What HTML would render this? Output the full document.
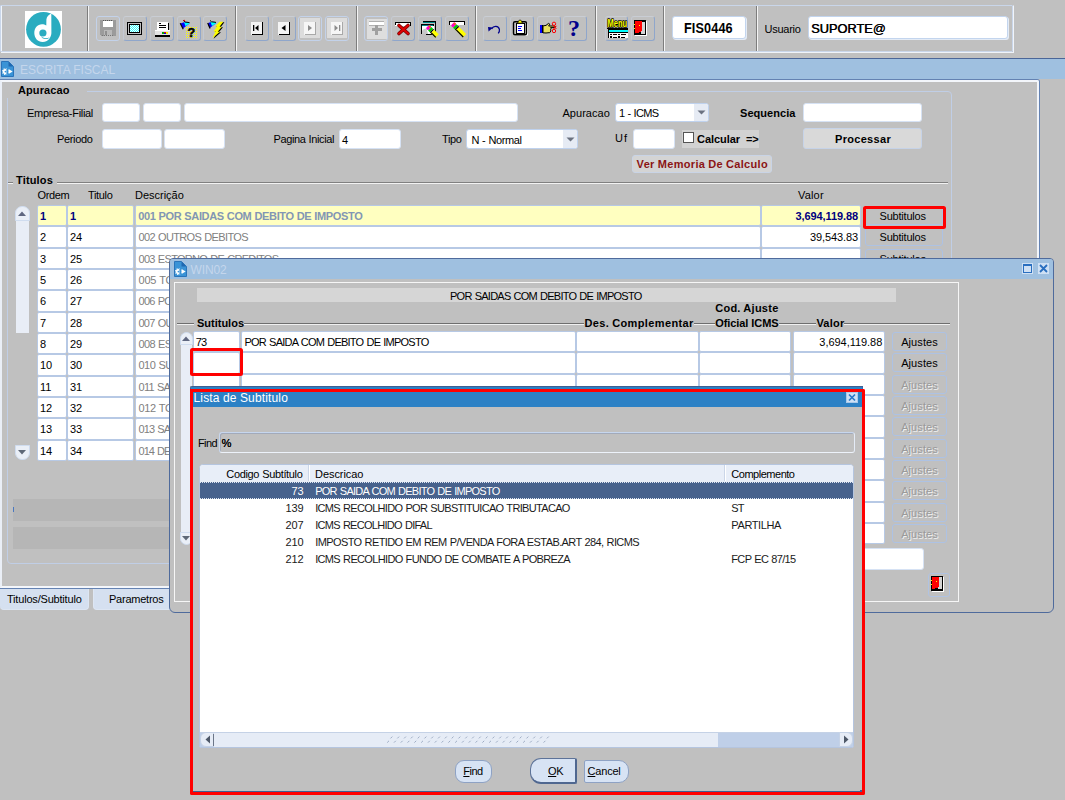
<!DOCTYPE html>
<html lang="pt-BR"><head><meta charset="utf-8"><title>ESCRITA FISCAL</title>
<style>
html,body{margin:0;padding:0;}
body{width:1065px;height:800px;overflow:hidden;background:#c0c0c0;font-family:"Liberation Sans",Arial,sans-serif;font-size:11px;color:#000;}
#root{position:relative;width:1065px;height:800px;overflow:hidden;background:#c0c0c0;}
#root div,#root span.t,#root svg{position:absolute;box-sizing:border-box;}
.t{white-space:nowrap;line-height:13px;font-size:11px;}
.b{font-weight:bold;}
.fld{background:#fff;border:1px solid #d6e2f4;border-radius:3px;}
.cell{background:#fff;border:1px solid #b7c9e5;border-radius:2px;}
.celly{background:#ffffc0;border:1px solid #b7c9e5;border-radius:2px;}
.tbtn{border:1px solid #8fa6cb;border-top-color:#c9cdd4;border-left-color:#c4c9d2;border-radius:3px;background:#c0c0c0;}
.tbtnd{border:1px solid #c3d2ea;border-radius:3px;background:#c0c0c0;}
.sep{border-left:1px solid #7d7d7d;border-right:1px solid #f4f4f4;width:2px;}
.btn{border:1px solid #b4c4de;border-radius:3px;background:#c0c0c0;text-align:center;}
.gray{color:#808080;}
.dis{color:#9a9a9a;text-shadow:1px 1px 0 #f0f0f0;}

</style></head><body>
<div id="root">
<div style="left:1px;top:5px;width:1013px;height:48px;border:1px solid #f0f4fa;border-top-color:#c0c0c0;"></div>
<div style="left:0px;top:5px;width:1013px;height:47px;border:1px solid #c9d6ea;border-radius:1px;"></div>
<div class="sep" style="left:87px;top:6px;width:2px;height:45px;"></div>
<div class="sep" style="left:235px;top:6px;width:2px;height:45px;"></div>
<div class="sep" style="left:356px;top:6px;width:2px;height:45px;"></div>
<div class="sep" style="left:475px;top:6px;width:2px;height:45px;"></div>
<div class="sep" style="left:595px;top:6px;width:2px;height:45px;"></div>
<div class="sep" style="left:663px;top:6px;width:2px;height:45px;"></div>
<div class="sep" style="left:756px;top:6px;width:2px;height:45px;"></div>
<div style="left:25px;top:11px;width:37px;height:37px;background:#fff;"></div>
<svg style="left:25px;top:11px" width="37" height="37" viewBox="0 0 37 37"><circle cx="18.5" cy="18.3" r="17.4" fill="#2aacc0"/><path d="M26.3 2.6 C24 3.6 21.6 5.6 21.4 8.5 L21.3 14.6 C20 13.8 18.6 13.3 17 13.3 C12.4 13.3 9.3 17.2 9.3 22 C9.3 27 12.8 31 17.6 31 C20.6 31 23.2 29.6 24.9 26.9 C25.9 25.3 26.4 23.6 26.4 21.6 Z" fill="#fff"/><circle cx="17.9" cy="22" r="3.6" fill="#2aacc0"/><path d="M15.6 24.6 C17.6 27.4 21.6 27.9 24.8 26.2 C22.4 29.0 17.2 28.9 15.6 24.6 Z" fill="#2aacc0"/></svg>
<div class="tbtnd" style="left:96px;top:16px;width:24px;height:24.5px;"></div>
<svg style="left:96px;top:16px" width="24" height="24" viewBox="0 0 24 24"><g transform="translate(0,0)"><g shape-rendering="crispEdges"><path d="M4 4 H20 V20 H5 L4 19 Z" fill="#9b9b9b"/><rect x="7" y="5" width="10" height="6" fill="#fff"/><rect x="8" y="14" width="8" height="6" fill="#b9b9b9"/><rect x="9" y="15" width="2" height="4" fill="#8f8f8f"/></g><path d="M7 4.5 H17" stroke="#555" stroke-width="1" stroke-dasharray="1 1"/><path d="M6 19.5 H18" stroke="#777" stroke-width="1" stroke-dasharray="1 1"/></g></svg>
<div class="tbtn" style="left:123px;top:16px;width:24px;height:24.5px;"></div>
<svg style="left:123px;top:16px" width="24" height="24" viewBox="0 0 24 24"><g transform="translate(0,0)"><g shape-rendering="crispEdges"><rect x="4" y="6" width="15" height="13" rx="1" fill="#000"/><rect x="5" y="7" width="13" height="11" fill="#c0c0c0"/><rect x="6" y="8" width="11" height="9" fill="#000"/><rect x="7" y="9" width="9" height="7" fill="#3ff"/><rect x="7" y="9" width="1" height="1" fill="#fff"/><rect x="9" y="9" width="1" height="1" fill="#fff"/><rect x="11" y="9" width="1" height="1" fill="#fff"/><rect x="13" y="9" width="1" height="1" fill="#fff"/><rect x="15" y="9" width="1" height="1" fill="#fff"/><rect x="8" y="10" width="1" height="1" fill="#fff"/><rect x="10" y="10" width="1" height="1" fill="#fff"/><rect x="12" y="10" width="1" height="1" fill="#fff"/><rect x="14" y="10" width="1" height="1" fill="#fff"/><rect x="7" y="11" width="1" height="1" fill="#fff"/><rect x="9" y="11" width="1" height="1" fill="#fff"/><rect x="11" y="11" width="1" height="1" fill="#fff"/><rect x="13" y="11" width="1" height="1" fill="#fff"/><rect x="15" y="11" width="1" height="1" fill="#fff"/><rect x="8" y="12" width="1" height="1" fill="#fff"/><rect x="10" y="12" width="1" height="1" fill="#fff"/><rect x="12" y="12" width="1" height="1" fill="#fff"/><rect x="14" y="12" width="1" height="1" fill="#fff"/><rect x="7" y="13" width="1" height="1" fill="#fff"/><rect x="9" y="13" width="1" height="1" fill="#fff"/><rect x="11" y="13" width="1" height="1" fill="#fff"/><rect x="13" y="13" width="1" height="1" fill="#fff"/><rect x="15" y="13" width="1" height="1" fill="#fff"/><rect x="8" y="14" width="1" height="1" fill="#fff"/><rect x="10" y="14" width="1" height="1" fill="#fff"/><rect x="12" y="14" width="1" height="1" fill="#fff"/><rect x="14" y="14" width="1" height="1" fill="#fff"/><rect x="7" y="15" width="1" height="1" fill="#fff"/><rect x="9" y="15" width="1" height="1" fill="#fff"/><rect x="11" y="15" width="1" height="1" fill="#fff"/><rect x="13" y="15" width="1" height="1" fill="#fff"/><rect x="15" y="15" width="1" height="1" fill="#fff"/></g></g></svg>
<div class="tbtn" style="left:150px;top:16px;width:24px;height:24.5px;"></div>
<svg style="left:150px;top:16px" width="24" height="24" viewBox="0 0 24 24"><g transform="translate(0,0)"><g shape-rendering="crispEdges"><rect x="7" y="6" width="11" height="8" fill="#fff"/><path d="M18 7 V14" stroke="#000"/><path d="M7 14.5 H18" stroke="#000"/><path d="M9 7.5 H11 M9 9.5 H16 M9 11.5 H16" stroke="#000"/><rect x="5" y="14" width="15" height="5" fill="#e4e4e4"/><path d="M5 14.5 H20" stroke="#fff"/><rect x="5" y="19" width="15" height="1.5" fill="#000"/><rect x="6" y="20" width="2" height="1.4" fill="#000"/><rect x="17" y="20" width="2" height="1.4" fill="#000"/><rect x="12" y="16" width="2" height="2" fill="#0a0"/><rect x="14" y="16" width="2" height="2" fill="#e00"/><rect x="14" y="17" width="2" height="1" fill="#00d"/><rect x="16" y="16" width="2" height="1.5" fill="#ee0"/></g></g></svg>
<div class="tbtn" style="left:177px;top:16px;width:24px;height:24.5px;"></div>
<svg style="left:177px;top:16px" width="24" height="24" viewBox="0 0 24 24"><g transform="translate(0,1)"><path d="M3.5 6.5 L6 11.5 L12.5 6.5 L11 5 L7 5.2 Z" fill="#00f"/><path d="M7 5.2 L11.6 5.2 L12.6 6.4 L8.5 9.2 Z" fill="#0ff"/><path d="M3.2 6.2 L6.2 12.2" stroke="#000" stroke-width="1.2"/><path d="M6.3 3.4 L8 5 L12.5 5.6" stroke="#000" stroke-width="1" fill="none"/><circle cx="7.3" cy="3.6" r="0.8" fill="#f00"/><g fill="#ff0" shape-rendering="crispEdges"><rect x="9" y="10" width="1" height="1"/><rect x="9" y="12" width="1" height="1"/><rect x="9" y="14" width="1" height="1"/><rect x="9" y="16" width="1" height="1"/><rect x="9" y="18" width="1" height="1"/><rect x="9" y="20" width="1" height="1"/><rect x="11" y="10" width="1" height="1"/><rect x="11" y="12" width="1" height="1"/><rect x="11" y="14" width="1" height="1"/><rect x="11" y="16" width="1" height="1"/><rect x="11" y="18" width="1" height="1"/><rect x="11" y="20" width="1" height="1"/><rect x="13" y="10" width="1" height="1"/><rect x="13" y="12" width="1" height="1"/><rect x="13" y="14" width="1" height="1"/><rect x="13" y="16" width="1" height="1"/><rect x="13" y="18" width="1" height="1"/><rect x="13" y="20" width="1" height="1"/><rect x="15" y="10" width="1" height="1"/><rect x="15" y="12" width="1" height="1"/><rect x="15" y="14" width="1" height="1"/><rect x="15" y="16" width="1" height="1"/><rect x="15" y="18" width="1" height="1"/><rect x="15" y="20" width="1" height="1"/><rect x="17" y="10" width="1" height="1"/><rect x="17" y="12" width="1" height="1"/><rect x="17" y="14" width="1" height="1"/><rect x="17" y="16" width="1" height="1"/><rect x="17" y="18" width="1" height="1"/><rect x="17" y="20" width="1" height="1"/><rect x="19" y="10" width="1" height="1"/><rect x="19" y="12" width="1" height="1"/><rect x="19" y="14" width="1" height="1"/><rect x="19" y="16" width="1" height="1"/><rect x="19" y="18" width="1" height="1"/><rect x="19" y="20" width="1" height="1"/></g><text x="14.2" y="19.6" font-family="Liberation Sans,Arial,sans-serif" font-weight="bold" font-size="12.5" text-anchor="middle" fill="#000" stroke="#000" stroke-width="0.5">?</text></g></svg>
<div class="tbtn" style="left:203px;top:16px;width:24px;height:24.5px;"></div>
<svg style="left:203px;top:16px" width="24" height="24" viewBox="0 0 24 24"><g transform="translate(0.5,0.8)"><path d="M4.5 6.5 L6 11.5 L12.5 6.5 L11 5 L7 5.2 Z" fill="#00f"/><path d="M7 5.2 L11.6 5.2 L12.6 6.4 L8.5 9.2 Z" fill="#0ff"/><path d="M4.2 6.2 L6.6 11.6" stroke="#000" stroke-width="1.2"/><path d="M6.5 3.6 L8 5 L12.5 5.6" stroke="#000" stroke-width="1" fill="none"/><path d="M16 5 L19.8 5 L16 10 L18.4 10 L14.2 15 L16.4 15 L9 21.4 L12 14.6 L10 14.6 L13.6 9.6 L11.6 9.6 Z" fill="#000" transform="translate(1.1,0.5)"/><path d="M16 5 L19.8 5 L16 10 L18.4 10 L14.2 15 L16.4 15 L9 21.4 L12 14.6 L10 14.6 L13.6 9.6 L11.6 9.6 Z" fill="#ff0"/></g></svg>
<div class="tbtn" style="left:244.5px;top:16px;width:24px;height:24.5px;"></div>
<svg style="left:244.5px;top:16px" width="24" height="24" viewBox="0 0 24 24"><g transform="translate(0,0)"><g shape-rendering="crispEdges"><rect x="6" y="6" width="11" height="12.5" fill="#f4f4f4"/><path d="M17.5 6 V19 M7 18.5 H18" stroke="#000" fill="none"/></g><rect x="8" y="9" width="1.3" height="6" fill="#000"/><path d="M13.5 9 V15 L10 12 Z" fill="#000"/></g></svg>
<div class="tbtn" style="left:271.5px;top:16px;width:24px;height:24.5px;"></div>
<svg style="left:271.5px;top:16px" width="24" height="24" viewBox="0 0 24 24"><g transform="translate(0,0)"><g shape-rendering="crispEdges"><rect x="6" y="6" width="11" height="12.5" fill="#f4f4f4"/><path d="M17.5 6 V19 M7 18.5 H18" stroke="#000" fill="none"/></g><path d="M13.5 9 V15 L9.5 12 Z" fill="#000"/></g></svg>
<div class="tbtnd" style="left:298px;top:16px;width:24px;height:24.5px;"></div>
<svg style="left:298px;top:16px" width="24" height="24" viewBox="0 0 24 24"><g transform="translate(0,0)"><g shape-rendering="crispEdges"><rect x="2" y="2" width="20" height="20" fill="#dcdcdc"/><rect x="6" y="6" width="11" height="12.5" fill="#f6f6f6"/><path d="M17.5 6 V18.5 M7 18.5 H18" stroke="#a8a8a8" fill="none"/></g><path d="M10 9 V15 L14 12 Z" fill="#8c8c8c"/></g></svg>
<div class="tbtnd" style="left:324.5px;top:16px;width:24px;height:24.5px;"></div>
<svg style="left:324.5px;top:16px" width="24" height="24" viewBox="0 0 24 24"><g transform="translate(0,0)"><g shape-rendering="crispEdges"><rect x="2" y="2" width="20" height="20" fill="#dcdcdc"/><rect x="6" y="6" width="11" height="12.5" fill="#f6f6f6"/><path d="M17.5 6 V18.5 M7 18.5 H18" stroke="#a8a8a8" fill="none"/></g><path d="M9.5 9 V15 L13 12 Z" fill="#8c8c8c"/><rect x="14" y="9" width="1.3" height="6" fill="#8c8c8c"/></g></svg>
<div class="tbtnd" style="left:364px;top:16px;width:24px;height:24.5px;"></div>
<svg style="left:364px;top:16px" width="24" height="24" viewBox="0 0 24 24"><g transform="translate(1,0.8)"><g shape-rendering="crispEdges"><rect x="2" y="2" width="20" height="20" fill="#dedede"/><rect x="4" y="5" width="15" height="3" fill="#fff"/><path d="M4 4.5 H19 M4 8.5 H19" stroke="#b0b0b0"/><rect x="10" y="8" width="3" height="10" fill="#a0a0a0"/><rect x="7" y="11" width="10" height="3" fill="#a0a0a0"/></g></g></svg>
<div class="tbtn" style="left:391px;top:16px;width:24px;height:24.5px;"></div>
<svg style="left:391px;top:16px" width="24" height="24" viewBox="0 0 24 24"><g transform="translate(0.5,1.5)"><g shape-rendering="crispEdges"><rect x="3" y="5" width="15" height="3" fill="#fff"/><path d="M3 4.5 H19 M18.5 4 V8 M3.5 4 V7" stroke="#000" fill="none"/></g><path d="M7.5 8 L16.5 16 M16.5 8 L7.5 16" stroke="#700" stroke-width="3.6" stroke-linecap="round"/><path d="M7.5 8 L16.5 16 M16.5 8 L7.5 16" stroke="#d00" stroke-width="2.2" stroke-linecap="round"/></g></svg>
<div class="tbtn" style="left:418px;top:16px;width:24px;height:24.5px;"></div>
<svg style="left:418px;top:16px" width="24" height="24" viewBox="0 0 24 24"><g transform="translate(0,1)"><g shape-rendering="crispEdges"><rect x="5" y="4" width="13" height="2" fill="#000"/><rect x="5" y="5" width="13" height="1" fill="#088"/><rect x="3" y="8" width="13" height="9" fill="#fff"/><rect x="3" y="7" width="13" height="2" fill="#000"/><rect x="4" y="8" width="11" height="1" fill="#088"/><path d="M3.5 8 V17 M17.5 5 V17 M8 17.5 H18" stroke="#000" fill="none"/></g><path d="M4 17 L4 14 Q5 11.5 8.5 11.5 L10 17 Z" fill="#c8c8c8"/><g transform="translate(9.5,9.5) rotate(45)"><rect x="0" y="-2.4" width="3.2" height="4.8" rx="1" fill="#f0c"/><rect x="0.6" y="-2.4" width="2" height="1.8" fill="#f60"/><rect x="3.2" y="-2.4" width="2.6" height="4.8" fill="#0c0"/><rect x="5.8" y="-2.4" width="1.2" height="4.8" fill="#000"/><rect x="7" y="-2.4" width="6.5" height="4.8" fill="#ff0"/><rect x="7" y="1.2" width="6.5" height="1.2" fill="#000"/></g></g></svg>
<div class="tbtn" style="left:445px;top:16px;width:24px;height:24.5px;"></div>
<svg style="left:445px;top:16px" width="24" height="24" viewBox="0 0 24 24"><g transform="translate(-0.5,1.2)"><g shape-rendering="crispEdges"><rect x="4" y="5" width="15" height="3" fill="#fff"/><path d="M4 4.5 H20 M19.5 4 V8 M4.5 4 V8" stroke="#000" fill="none"/></g><g transform="translate(8,6.5) rotate(45)"><rect x="0" y="-2.4" width="3.2" height="4.8" rx="1" fill="#f0c"/><rect x="0.6" y="-2.4" width="2" height="1.8" fill="#f60"/><rect x="3.2" y="-2.4" width="2.6" height="4.8" fill="#0c0"/><rect x="5.8" y="-2.4" width="1.2" height="4.8" fill="#000"/><rect x="7" y="-2.4" width="10" height="4.8" fill="#ff0"/><rect x="7" y="1.2" width="10" height="1.2" fill="#000"/></g></g></svg>
<div class="tbtn" style="left:483px;top:16px;width:24px;height:24.5px;"></div>
<svg style="left:483px;top:16px" width="24" height="24" viewBox="0 0 24 24"><g transform="translate(0,0.5)"><path d="M8.6 12.4 C10.6 8.8 15.6 9.2 16.4 12.8 C16.7 14.4 16.2 15.6 15.2 16.8" fill="none" stroke="#00008b" stroke-width="1.25"/><path d="M5 10.4 L10 11 L5.6 15 Z" fill="#00008b"/></g></svg>
<div class="tbtn" style="left:510px;top:16px;width:24px;height:24.5px;"></div>
<svg style="left:510px;top:16px" width="24" height="24" viewBox="0 0 24 24"><g transform="translate(-1,-0.8)"><rect x="5" y="7.5" width="14" height="13" rx="1.5" fill="#fff"/><rect x="4.5" y="6.5" width="13" height="13" rx="1.5" fill="#c0c0c0" stroke="#000" stroke-width="1.4"/><g shape-rendering="crispEdges"><rect x="7" y="8" width="8" height="10" fill="#fff" stroke="#000" stroke-width="1"/><path d="M9 11.5 H13 M9 13.5 H12 M9 15.5 H13" stroke="#00f"/></g><path d="M8.5 8 L9.5 6 L10.5 4.8 H11.5 L12.5 6 L13.5 8 Z" fill="#ff0" stroke="#000" stroke-width="0.8"/></g></svg>
<div class="tbtn" style="left:537px;top:16px;width:24px;height:24.5px;"></div>
<svg style="left:537px;top:16px" width="24" height="24" viewBox="0 0 24 24"><g transform="translate(0,0.4)"><g shape-rendering="crispEdges"><rect x="3" y="9" width="2" height="8" fill="#00f"/><rect x="5" y="9" width="1" height="8" fill="#000"/></g><path d="M6 9.5 L9 9 L11.5 7 L12.8 7.8 L11.6 9.6 L18 9.6 Q19 10.4 18 11.2 L13.6 11.2 Q14.6 12.2 13.6 12.9 Q14.4 13.9 13.4 14.6 Q14 15.6 12.8 16.2 L9 16.6 L6 16.4 Z" fill="#e8e060" stroke="#000" stroke-width="1"/><circle cx="17" cy="7.4" r="1.7" fill="none" stroke="#f00" stroke-width="1"/><circle cx="17" cy="14.6" r="1.7" fill="none" stroke="#f00" stroke-width="1"/><path d="M16.2 9 L19.4 12.6 M16.2 13 L19.4 9.4" stroke="#f00" stroke-width="1"/></g></svg>
<div class="tbtn" style="left:563px;top:16px;width:24px;height:24.5px;"></div>
<svg style="left:563px;top:16px" width="24" height="24" viewBox="0 0 24 24"><g transform="translate(-1,0)"><text x="12" y="20" font-family="Liberation Serif,Times New Roman,serif" font-weight="bold" font-size="24" text-anchor="middle" fill="#00008b">?</text></g></svg>
<div class="tbtn" style="left:604.5px;top:16px;width:23px;height:24.5px;"></div>
<svg style="left:604.5px;top:16px" width="24" height="24" viewBox="0 0 24 24"><g transform="translate(0,0)"><text x="2.6" y="11.2" font-family="Liberation Sans,Arial,sans-serif" font-weight="bold" font-size="11" fill="#000" stroke="#000" stroke-width="1.7" stroke-linejoin="round" textLength="19.5" lengthAdjust="spacingAndGlyphs">Menu</text><text x="2.6" y="11.2" font-family="Liberation Sans,Arial,sans-serif" font-weight="bold" font-size="11" fill="#ff0" textLength="19.5" lengthAdjust="spacingAndGlyphs">Menu</text><g shape-rendering="crispEdges"><rect x="2" y="12" width="21" height="1" fill="#000"/><rect x="3" y="14" width="20" height="2" fill="#0ff"/><rect x="3" y="13.4" width="20" height="0.8" fill="#000"/><rect x="3" y="16" width="20" height="6.4" fill="#fff"/><path d="M3.5 13 V22.4 M3 16.5 H23" stroke="#000" fill="none"/><rect x="5" y="17.6" width="2" height="1.5" fill="#000"/><rect x="8" y="18" width="4" height="1" fill="#000"/><rect x="13" y="17.6" width="2" height="1.5" fill="#000"/><rect x="16" y="18" width="5" height="1" fill="#000"/><rect x="5" y="20.4" width="2" height="1.5" fill="#000"/><rect x="8" y="20.8" width="4" height="1" fill="#000"/><rect x="13" y="20.4" width="2" height="1.5" fill="#000"/><rect x="16" y="20.8" width="4" height="1" fill="#000"/></g></g></svg>
<div class="tbtn" style="left:630.5px;top:16px;width:24px;height:24.5px;"></div>
<svg style="left:630.5px;top:16px" width="24" height="24" viewBox="0 0 24 24"><g transform="translate(0,0.5)"><g shape-rendering="crispEdges" transform="translate(0,0)"><rect x="4" y="4.5" width="12" height="15" fill="#fff"/><rect x="3" y="3.5" width="12" height="15" fill="#000"/><rect x="10" y="5" width="4" height="12.4" fill="#d4d4d4"/><path d="M4 4.5 H10.5 V14.5 L9.5 15.5 L7 16.5 H4 Z" fill="#f00"/><rect x="8" y="8.5" width="1.4" height="1.4" fill="#ff0"/><rect x="3" y="7.5" width="1" height="1" fill="#ff0"/><rect x="3" y="11.5" width="1" height="1" fill="#ff0"/></g></g></svg>
<div class="fld" style="left:672px;top:16px;width:74px;height:23px;border-color:#c3d5ee;box-shadow:1px 1px 0 #e4ebf5;"></div>
<span class="t b" style="left:684.2px;top:20px;font-size:14.3px;line-height:16px;color:#000;transform-origin:0 0;transform:scaleX(0.885);letter-spacing:0.15px;">FIS0446</span>
<span class="t" style="left:764.5px;top:23px;letter-spacing:-0.244px;">Usuario</span>
<div class="fld" style="left:807.5px;top:16px;width:200px;height:23px;border-color:#c3d5ee;box-shadow:1px 1px 0 #e4ebf5;"></div>
<span class="t" style="left:811.3px;top:21px;font-size:13.7px;line-height:16px;color:#000;text-shadow:0.5px 0 0 #000;transform-origin:0 0;transform:scaleX(0.935);">SUPORTE@</span>
<div style="left:0px;top:58px;width:1065px;height:1px;background:#4b6698;"></div>
<div style="left:0px;top:59px;width:1065px;height:20px;background:#9fc0e0;"></div>
<svg style="left:1px;top:61px" width="13" height="16" viewBox="0 0 13 16"><path d="M0.5 0.5 H7.5 L12.5 5.5 V15.5 H0.5 Z" fill="#3a93d6" stroke="#2a74ba" stroke-width="1"/><path d="M7.5 0.8 V5.5 H12.2 Z" fill="#1f68b0"/><path d="M7.6 8.1 L11.6 10.6 L7.6 13.1 Z" fill="#fff"/><circle cx="4.4" cy="10.6" r="1.7" fill="none" stroke="#fff" stroke-width="1.7"/><circle cx="4.4" cy="10.6" r="2.8" fill="none" stroke="#fff" stroke-width="1.3" stroke-dasharray="1.1 1.1"/><path d="M5.4 7.6 H7.2 V13.6 H5.4 Z" fill="#3a93d6"/></svg>
<span class="t" style="left:20px;top:63px;font-size:12px;line-height:15px;color:#c4d6ec;letter-spacing:-0.062px;word-spacing:0.062px;">ESCRITA FISCAL</span>
<div style="left:0px;top:79px;width:1040px;height:510px;background:#6482b2;border-radius:0 3px 0 0;"></div>
<div style="left:0px;top:80px;width:1039px;height:508px;border:2px solid #f3f6fb;border-left-color:#eaeff7;background:#c0c0c0;border-radius:0 2px 0 0;"></div>
<div style="left:7px;top:91px;width:945px;height:473px;border:1px solid #c0cee6;border-radius:4px;"></div>
<div style="left:7px;top:84px;width:80px;height:14px;background:#c0c0c0;"></div>
<span class="t b" style="left:18px;top:84px;letter-spacing:0.094px;">Apuracao</span>
<span class="t" style="left:27px;top:107px;letter-spacing:-0.307px;">Empresa-Filial</span>
<div class="fld" style="left:102px;top:103px;width:38px;height:19px;"></div>
<div class="fld" style="left:143px;top:103px;width:38px;height:19px;"></div>
<div class="fld" style="left:184px;top:103px;width:334px;height:19px;"></div>
<span class="t" style="left:562.5px;top:107px;letter-spacing:0.026px;">Apuracao</span>
<div class="fld" style="left:615px;top:103px;width:94px;height:19px;border-color:#bfd2ee;"></div>
<span class="t" style="left:619px;top:107px;letter-spacing:-0.668px;word-spacing:0.668px;">1 - ICMS</span>
<div style="left:694px;top:104px;width:14px;height:17px;background:#e6ebf4;border-radius:0 2px 2px 0;"></div>
<svg style="left:697px;top:110px" width="9" height="5" viewBox="0 0 9 5"><path d="M0.5 0.5 H8.5 L4.5 4.5 Z" fill="#6b7280"/></svg>
<span class="t b" style="left:740px;top:107px;letter-spacing:0.052px;">Sequencia</span>
<div class="fld" style="left:803px;top:103px;width:119px;height:19px;"></div>
<span class="t" style="left:57px;top:133px;letter-spacing:-0.346px;">Periodo</span>
<div class="fld" style="left:102px;top:129px;width:60px;height:20px;"></div>
<div class="fld" style="left:164px;top:129px;width:61px;height:20px;"></div>
<span class="t" style="left:273.5px;top:133px;letter-spacing:-0.380px;word-spacing:0.380px;">Pagina Inicial</span>
<div class="fld" style="left:339px;top:129px;width:62px;height:20px;"></div>
<span class="t" style="left:342px;top:134px;">4</span>
<span class="t" style="left:442px;top:133px;letter-spacing:-0.375px;">Tipo</span>
<div class="fld" style="left:466px;top:129px;width:112px;height:20px;border-color:#bfd2ee;"></div>
<span class="t" style="left:471.5px;top:134px;letter-spacing:-0.396px;word-spacing:0.396px;">N - Normal</span>
<div style="left:563px;top:130px;width:14px;height:18px;background:#e6ebf4;border-radius:0 2px 2px 0;"></div>
<svg style="left:566px;top:137px" width="9" height="5" viewBox="0 0 9 5"><path d="M0.5 0.5 H8.5 L4.5 4.5 Z" fill="#6b7280"/></svg>
<span class="t" style="left:615px;top:132px;letter-spacing:1px;">Uf</span>
<div class="fld" style="left:633px;top:129px;width:42px;height:20px;"></div>
<div style="left:682px;top:130px;width:77px;height:18px;background:#d2d2d2;"></div>
<div style="left:683px;top:132px;width:11px;height:11px;background:#fff;border:1px solid #555;"></div>
<span class="t b" style="left:697px;top:133px;letter-spacing:-0.064px;word-spacing:0.064px;">Calcular&nbsp; =&gt;</span>
<div class="btn" style="left:803px;top:128px;width:119px;height:21px;background:#d9d9d9;border-color:#c6d3e8;"></div>
<span class="t b" style="left:835px;top:133px;letter-spacing:0.309px;">Processar</span>
<div class="btn" style="left:632px;top:155px;width:140px;height:18px;background:#d4d4d4;border-color:#c9d4e6;"></div>
<span class="t b" style="left:636.6px;top:158px;color:#8b1414;letter-spacing:0.320px;word-spacing:-0.320px;">Ver Memoria De Calculo</span>
<div style="left:8px;top:182px;width:5px;height:2px;border-top:1px solid #808080;border-bottom:1px solid #f2f2f2;"></div>
<div style="left:57px;top:182px;width:891px;height:2px;border-top:1px solid #808080;border-bottom:1px solid #f2f2f2;"></div>
<span class="t b" style="left:16px;top:174px;letter-spacing:0.163px;">Titulos</span>
<span class="t" style="left:37.5px;top:189px;letter-spacing:-0.375px;">Ordem</span>
<span class="t" style="left:88px;top:189px;letter-spacing:-0.333px;">Titulo</span>
<span class="t" style="left:135px;top:189px;letter-spacing:-0.017px;">Descrição</span>
<span class="t" style="left:798px;top:189px;letter-spacing:0.175px;">Valor</span>
<div class="celly" style="left:37px;top:205px;width:30px;height:21px;"></div>
<div class="celly" style="left:67px;top:205px;width:67px;height:21px;"></div>
<div class="celly" style="left:135.4px;top:205px;width:626px;height:21px;"></div>
<div class="celly" style="left:761.4px;top:205px;width:100px;height:21px;"></div>
<span class="t b" style="left:40px;top:210px;color:#000080;">1</span>
<span class="t b" style="left:70px;top:210px;color:#000080;">1</span>
<span class="t b" style="left:138.2px;top:210px;color:#8296b4;letter-spacing:-0.357px;word-spacing:0.357px;">001 POR SAIDAS COM DEBITO DE IMPOSTO</span>
<span class="t b" style="left:795.5px;top:210px;color:#000080;letter-spacing:-0.094px;">3,694,119.88</span>
<div class="btn" style="left:865px;top:206px;width:78px;height:19px;border-color:#adc2e4;"></div>
<span class="t" style="left:879.5px;top:210px;letter-spacing:-0.206px;">Subtitulos</span>
<div class="cell" style="left:37px;top:226px;width:30px;height:22px;"></div>
<div class="cell" style="left:67px;top:226px;width:67px;height:22px;"></div>
<div class="cell" style="left:135.4px;top:226px;width:626px;height:22px;"></div>
<div class="cell" style="left:761.4px;top:226px;width:100px;height:22px;"></div>
<span class="t" style="left:40px;top:231px;">2</span>
<span class="t" style="left:70px;top:231px;">24</span>
<span class="t gray" style="left:138.5px;top:231px;letter-spacing:-0.638px;word-spacing:0.638px;">002 OUTROS DEBITOS</span>
<span class="t" style="left:810px;top:231px;letter-spacing:-0.104px;">39,543.83</span>
<div class="btn" style="left:865px;top:227px;width:78px;height:19px;border-color:#adc2e4;"></div>
<span class="t" style="left:879.5px;top:231px;letter-spacing:-0.206px;">Subtitulos</span>
<div class="cell" style="left:37px;top:248px;width:30px;height:21px;"></div>
<div class="cell" style="left:67px;top:248px;width:67px;height:21px;"></div>
<div class="cell" style="left:135.4px;top:248px;width:626px;height:21px;"></div>
<div class="cell" style="left:761.4px;top:248px;width:100px;height:21px;"></div>
<span class="t" style="left:40px;top:253px;">3</span>
<span class="t" style="left:70px;top:253px;">25</span>
<span class="t gray" style="left:138.5px;top:253px;letter-spacing:-0.690px;word-spacing:0.690px;">003 ESTORNO DE CREDITOS</span>
<div class="btn" style="left:865px;top:249px;width:78px;height:19px;border-color:#adc2e4;"></div>
<span class="t" style="left:879.5px;top:253px;letter-spacing:-0.206px;">Subtitulos</span>
<div class="cell" style="left:37px;top:269px;width:30px;height:21px;"></div>
<div class="cell" style="left:67px;top:269px;width:67px;height:21px;"></div>
<div class="cell" style="left:135.4px;top:269px;width:626px;height:21px;"></div>
<div class="cell" style="left:761.4px;top:269px;width:100px;height:21px;"></div>
<span class="t" style="left:40px;top:274px;">5</span>
<span class="t" style="left:70px;top:274px;">26</span>
<span class="t gray" style="left:138.5px;top:274px;letter-spacing:-0.183px;word-spacing:0.183px;">005 TOTAL DE DEBITOS</span>
<div class="btn" style="left:865px;top:270px;width:78px;height:19px;border-color:#adc2e4;"></div>
<span class="t" style="left:879.5px;top:274px;letter-spacing:-0.206px;">Subtitulos</span>
<div class="cell" style="left:37px;top:290px;width:30px;height:22px;"></div>
<div class="cell" style="left:67px;top:290px;width:67px;height:22px;"></div>
<div class="cell" style="left:135.4px;top:290px;width:626px;height:22px;"></div>
<div class="cell" style="left:761.4px;top:290px;width:100px;height:22px;"></div>
<span class="t" style="left:40px;top:295px;">6</span>
<span class="t" style="left:70px;top:295px;">27</span>
<span class="t gray" style="left:138.5px;top:295px;letter-spacing:-0.730px;word-spacing:0.730px;">006 POR ENTRADAS COM CREDITO DE IMPOSTO</span>
<div class="btn" style="left:865px;top:291px;width:78px;height:19px;border-color:#adc2e4;"></div>
<span class="t" style="left:879.5px;top:295px;letter-spacing:-0.206px;">Subtitulos</span>
<div class="cell" style="left:37px;top:312px;width:30px;height:21px;"></div>
<div class="cell" style="left:67px;top:312px;width:67px;height:21px;"></div>
<div class="cell" style="left:135.4px;top:312px;width:626px;height:21px;"></div>
<div class="cell" style="left:761.4px;top:312px;width:100px;height:21px;"></div>
<span class="t" style="left:40px;top:317px;">7</span>
<span class="t" style="left:70px;top:317px;">28</span>
<span class="t gray" style="left:138.5px;top:317px;letter-spacing:-0.744px;word-spacing:0.744px;">007 OUTROS CREDITOS</span>
<div class="btn" style="left:865px;top:313px;width:78px;height:19px;border-color:#adc2e4;"></div>
<span class="t" style="left:879.5px;top:317px;letter-spacing:-0.206px;">Subtitulos</span>
<div class="cell" style="left:37px;top:333px;width:30px;height:21px;"></div>
<div class="cell" style="left:67px;top:333px;width:67px;height:21px;"></div>
<div class="cell" style="left:135.4px;top:333px;width:626px;height:21px;"></div>
<div class="cell" style="left:761.4px;top:333px;width:100px;height:21px;"></div>
<span class="t" style="left:40px;top:338px;">8</span>
<span class="t" style="left:70px;top:338px;">29</span>
<span class="t gray" style="left:138.5px;top:338px;letter-spacing:-0.597px;word-spacing:0.597px;">008 ESTORNO DE DEBITOS</span>
<div class="btn" style="left:865px;top:334px;width:78px;height:19px;border-color:#adc2e4;"></div>
<span class="t" style="left:879.5px;top:338px;letter-spacing:-0.206px;">Subtitulos</span>
<div class="cell" style="left:37px;top:354px;width:30px;height:22px;"></div>
<div class="cell" style="left:67px;top:354px;width:67px;height:22px;"></div>
<div class="cell" style="left:135.4px;top:354px;width:626px;height:22px;"></div>
<div class="cell" style="left:761.4px;top:354px;width:100px;height:22px;"></div>
<span class="t" style="left:40px;top:359px;">10</span>
<span class="t" style="left:70px;top:359px;">30</span>
<span class="t gray" style="left:138.5px;top:359px;letter-spacing:-0.501px;word-spacing:0.501px;">010 SUBTOTAL</span>
<div class="btn" style="left:865px;top:355px;width:78px;height:19px;border-color:#adc2e4;"></div>
<span class="t" style="left:879.5px;top:359px;letter-spacing:-0.206px;">Subtitulos</span>
<div class="cell" style="left:37px;top:376px;width:30px;height:21px;"></div>
<div class="cell" style="left:67px;top:376px;width:67px;height:21px;"></div>
<div class="cell" style="left:135.4px;top:376px;width:626px;height:21px;"></div>
<div class="cell" style="left:761.4px;top:376px;width:100px;height:21px;"></div>
<span class="t" style="left:40px;top:381px;">11</span>
<span class="t" style="left:70px;top:381px;">31</span>
<span class="t gray" style="left:138.5px;top:381px;letter-spacing:-0.722px;word-spacing:0.722px;">011 SALDO CREDOR DO PERIODO ANTERIOR</span>
<div class="btn" style="left:865px;top:377px;width:78px;height:19px;border-color:#adc2e4;"></div>
<span class="t" style="left:879.5px;top:381px;letter-spacing:-0.206px;">Subtitulos</span>
<div class="cell" style="left:37px;top:397px;width:30px;height:21px;"></div>
<div class="cell" style="left:67px;top:397px;width:67px;height:21px;"></div>
<div class="cell" style="left:135.4px;top:397px;width:626px;height:21px;"></div>
<div class="cell" style="left:761.4px;top:397px;width:100px;height:21px;"></div>
<span class="t" style="left:40px;top:402px;">12</span>
<span class="t" style="left:70px;top:402px;">32</span>
<span class="t gray" style="left:138.5px;top:402px;letter-spacing:-0.311px;word-spacing:0.311px;">012 TOTAL DE CREDITOS</span>
<div class="btn" style="left:865px;top:398px;width:78px;height:19px;border-color:#adc2e4;"></div>
<span class="t" style="left:879.5px;top:402px;letter-spacing:-0.206px;">Subtitulos</span>
<div class="cell" style="left:37px;top:418px;width:30px;height:22px;"></div>
<div class="cell" style="left:67px;top:418px;width:67px;height:22px;"></div>
<div class="cell" style="left:135.4px;top:418px;width:626px;height:22px;"></div>
<div class="cell" style="left:761.4px;top:418px;width:100px;height:22px;"></div>
<span class="t" style="left:40px;top:423px;">13</span>
<span class="t" style="left:70px;top:423px;">33</span>
<span class="t gray" style="left:138.5px;top:423px;letter-spacing:-0.853px;word-spacing:0.853px;">013 SALDO DEVEDOR</span>
<div class="btn" style="left:865px;top:419px;width:78px;height:19px;border-color:#adc2e4;"></div>
<span class="t" style="left:879.5px;top:423px;letter-spacing:-0.206px;">Subtitulos</span>
<div class="cell" style="left:37px;top:440px;width:30px;height:21px;"></div>
<div class="cell" style="left:67px;top:440px;width:67px;height:21px;"></div>
<div class="cell" style="left:135.4px;top:440px;width:626px;height:21px;"></div>
<div class="cell" style="left:761.4px;top:440px;width:100px;height:21px;"></div>
<span class="t" style="left:40px;top:445px;">14</span>
<span class="t" style="left:70px;top:445px;">34</span>
<span class="t gray" style="left:138.5px;top:445px;letter-spacing:-0.982px;word-spacing:0.982px;">014 DEDUCOES</span>
<div class="btn" style="left:865px;top:441px;width:78px;height:19px;border-color:#adc2e4;"></div>
<span class="t" style="left:879.5px;top:445px;letter-spacing:-0.206px;">Subtitulos</span>
<div style="left:863px;top:206px;width:83px;height:23px;border:3px solid #ff0000;border-radius:2.5px;"></div>
<div style="left:16px;top:221px;width:12.5px;height:112px;background:#e8edf6;"></div>
<div style="left:15px;top:206px;width:14.8px;height:15px;background:#eaeff7;border:1px solid #cfdcef;border-radius:7px 7px 0 0;"></div>
<div style="left:15px;top:445px;width:14.8px;height:15px;background:#eaeff7;border:1px solid #cfdcef;border-radius:0 0 7px 7px;"></div>
<svg style="left:15px;top:206px" width="14" height="254" viewBox="0 0 14 254"><path d="M3.0 10.0 H11.0 L7.0 5.5 Z" fill="#5f6780"/><path d="M3.0 244.0 H11.0 L7.0 248.5 Z" fill="#5e6877"/></svg>
<div style="left:13px;top:499px;width:940px;height:22px;background:#b6b6b6;"></div>
<div style="left:13px;top:527px;width:940px;height:22px;background:#b6b6b6;"></div>
<div style="left:13px;top:507px;width:1px;height:5px;background:#4a78c0;"></div>
<div style="left:0px;top:589px;width:89px;height:21px;background:#d5e0f0;border:1px solid #dde6f3;border-top:none;border-left:none;border-radius:0 0 4px 4px;"></div>
<span class="t" style="left:7px;top:593px;letter-spacing:-0.192px;">Titulos/Subtitulo</span>
<div style="left:92.5px;top:589px;width:90px;height:21px;background:#d5e0f0;border:1px solid #dde6f3;border-top:none;border-radius:0 0 4px 4px;"></div>
<span class="t" style="left:109px;top:593px;letter-spacing:-0.236px;">Parametros</span>
<div style="left:169px;top:258px;width:885px;height:355px;background:#c0c0c0;border:1px solid #4f6b9c;border-radius:4px 4px 6px 6px;overflow:hidden;"><div style="left:0;top:0;width:883px;height:20px;background:#9fc0e0;"></div></div>
<svg style="left:174px;top:261px" width="13" height="16" viewBox="0 0 13 16"><path d="M0.5 0.5 H7.5 L12.5 5.5 V15.5 H0.5 Z" fill="#3a93d6" stroke="#2a74ba" stroke-width="1"/><path d="M7.5 0.8 V5.5 H12.2 Z" fill="#1f68b0"/><path d="M7.6 8.1 L11.6 10.6 L7.6 13.1 Z" fill="#fff"/><circle cx="4.4" cy="10.6" r="1.7" fill="none" stroke="#fff" stroke-width="1.7"/><circle cx="4.4" cy="10.6" r="2.8" fill="none" stroke="#fff" stroke-width="1.3" stroke-dasharray="1.1 1.1"/><path d="M5.4 7.6 H7.2 V13.6 H5.4 Z" fill="#3a93d6"/></svg>
<span class="t" style="left:190.6px;top:262.5px;font-size:12px;line-height:15px;color:#c4d6ec;letter-spacing:-0.138px;">WIN02</span>
<div style="left:1022px;top:263px;width:11px;height:11px;background:#cfe0f4;"></div>
<svg style="left:1022px;top:263px" width="11" height="11" viewBox="0 0 11 11"><rect x="1.5" y="2" width="8" height="7.5" fill="none" stroke="#2a6fc0" stroke-width="1"/><path d="M1 2 H10" stroke="#2a6fc0" stroke-width="2"/></svg>
<div style="left:1038px;top:263px;width:11px;height:11px;background:#cfe0f4;"></div>
<svg style="left:1038px;top:263px" width="11" height="11" viewBox="0 0 11 11"><path d="M2 2 L9 9 M9 2 L2 9" stroke="#2a6fc0" stroke-width="1.8"/></svg>
<div style="left:174px;top:282px;width:785px;height:320px;border:1px solid #f6f6f6;"></div>
<div style="left:197px;top:288px;width:699px;height:14px;background:#d6d6d6;"></div>
<span class="t" style="left:450px;top:290px;letter-spacing:-0.748px;word-spacing:0.748px;">POR SAIDAS COM DEBITO DE IMPOSTO</span>
<div style="left:177px;top:323px;width:17px;height:2px;border-top:1px solid #6e6e6e;border-bottom:1px solid #f0f0f0;"></div>
<div style="left:244px;top:323px;width:340.4px;height:2px;border-top:1px solid #6e6e6e;border-bottom:1px solid #f0f0f0;"></div>
<div style="left:693.7px;top:323px;width:21.5px;height:2px;border-top:1px solid #6e6e6e;border-bottom:1px solid #f0f0f0;"></div>
<div style="left:778.6px;top:323px;width:37.8px;height:2px;border-top:1px solid #6e6e6e;border-bottom:1px solid #f0f0f0;"></div>
<div style="left:844.4px;top:323px;width:105.6px;height:2px;border-top:1px solid #6e6e6e;border-bottom:1px solid #f0f0f0;"></div>
<span class="t b" style="left:197px;top:317px;letter-spacing:-0.007px;">Sutitulos</span>
<span class="t b" style="left:584.4px;top:317px;letter-spacing:0.374px;word-spacing:-0.374px;">Des. Complementar</span>
<span class="t b" style="left:715.2px;top:302px;letter-spacing:0.268px;word-spacing:-0.268px;">Cod. Ajuste</span>
<span class="t b" style="left:715.2px;top:317px;letter-spacing:-0.072px;word-spacing:0.072px;">Oficial ICMS</span>
<span class="t b" style="left:816.4px;top:317px;letter-spacing:0.219px;">Valor</span>
<div class="cell" style="left:192.5px;top:331px;width:47.5px;height:21px;"></div>
<div class="cell" style="left:240.7px;top:331px;width:335.6px;height:21px;"></div>
<div class="cell" style="left:576.3px;top:331px;width:123px;height:21px;"></div>
<div class="cell" style="left:699.3px;top:331px;width:91.7px;height:21px;"></div>
<div class="cell" style="left:793px;top:331px;width:92px;height:21px;"></div>
<div class="btn" style="left:892px;top:332px;width:55px;height:19px;border-color:#adc2e4;"></div>
<span class="t" style="left:901.2px;top:336px;letter-spacing:0.075px;">Ajustes</span>
<div class="cell" style="left:192.5px;top:352px;width:47.5px;height:22px;"></div>
<div class="cell" style="left:240.7px;top:352px;width:335.6px;height:22px;"></div>
<div class="cell" style="left:576.3px;top:352px;width:123px;height:22px;"></div>
<div class="cell" style="left:699.3px;top:352px;width:91.7px;height:22px;"></div>
<div class="cell" style="left:793px;top:352px;width:92px;height:22px;"></div>
<div class="btn" style="left:892px;top:353px;width:55px;height:19px;border-color:#adc2e4;"></div>
<span class="t" style="left:901.2px;top:357px;letter-spacing:0.075px;">Ajustes</span>
<div class="cell" style="left:192.5px;top:374px;width:47.5px;height:21px;"></div>
<div class="cell" style="left:240.7px;top:374px;width:335.6px;height:21px;"></div>
<div class="cell" style="left:576.3px;top:374px;width:123px;height:21px;"></div>
<div class="cell" style="left:699.3px;top:374px;width:91.7px;height:21px;"></div>
<div class="cell" style="left:793px;top:374px;width:92px;height:21px;"></div>
<div class="btn" style="left:892px;top:375px;width:55px;height:19px;border-color:#adc2e4;"></div>
<span class="t dis" style="left:901.2px;top:379px;letter-spacing:0.075px;">Ajustes</span>
<div class="cell" style="left:192.5px;top:395px;width:47.5px;height:21px;"></div>
<div class="cell" style="left:240.7px;top:395px;width:335.6px;height:21px;"></div>
<div class="cell" style="left:576.3px;top:395px;width:123px;height:21px;"></div>
<div class="cell" style="left:699.3px;top:395px;width:91.7px;height:21px;"></div>
<div class="cell" style="left:793px;top:395px;width:92px;height:21px;"></div>
<div class="btn" style="left:892px;top:396px;width:55px;height:19px;border-color:#adc2e4;"></div>
<span class="t dis" style="left:901.2px;top:400px;letter-spacing:0.075px;">Ajustes</span>
<div class="cell" style="left:192.5px;top:416px;width:47.5px;height:22px;"></div>
<div class="cell" style="left:240.7px;top:416px;width:335.6px;height:22px;"></div>
<div class="cell" style="left:576.3px;top:416px;width:123px;height:22px;"></div>
<div class="cell" style="left:699.3px;top:416px;width:91.7px;height:22px;"></div>
<div class="cell" style="left:793px;top:416px;width:92px;height:22px;"></div>
<div class="btn" style="left:892px;top:417px;width:55px;height:19px;border-color:#adc2e4;"></div>
<span class="t dis" style="left:901.2px;top:421px;letter-spacing:0.075px;">Ajustes</span>
<div class="cell" style="left:192.5px;top:438px;width:47.5px;height:21px;"></div>
<div class="cell" style="left:240.7px;top:438px;width:335.6px;height:21px;"></div>
<div class="cell" style="left:576.3px;top:438px;width:123px;height:21px;"></div>
<div class="cell" style="left:699.3px;top:438px;width:91.7px;height:21px;"></div>
<div class="cell" style="left:793px;top:438px;width:92px;height:21px;"></div>
<div class="btn" style="left:892px;top:439px;width:55px;height:19px;border-color:#adc2e4;"></div>
<span class="t dis" style="left:901.2px;top:443px;letter-spacing:0.075px;">Ajustes</span>
<div class="cell" style="left:192.5px;top:459px;width:47.5px;height:21px;"></div>
<div class="cell" style="left:240.7px;top:459px;width:335.6px;height:21px;"></div>
<div class="cell" style="left:576.3px;top:459px;width:123px;height:21px;"></div>
<div class="cell" style="left:699.3px;top:459px;width:91.7px;height:21px;"></div>
<div class="cell" style="left:793px;top:459px;width:92px;height:21px;"></div>
<div class="btn" style="left:892px;top:460px;width:55px;height:19px;border-color:#adc2e4;"></div>
<span class="t dis" style="left:901.2px;top:464px;letter-spacing:0.075px;">Ajustes</span>
<div class="cell" style="left:192.5px;top:480px;width:47.5px;height:22px;"></div>
<div class="cell" style="left:240.7px;top:480px;width:335.6px;height:22px;"></div>
<div class="cell" style="left:576.3px;top:480px;width:123px;height:22px;"></div>
<div class="cell" style="left:699.3px;top:480px;width:91.7px;height:22px;"></div>
<div class="cell" style="left:793px;top:480px;width:92px;height:22px;"></div>
<div class="btn" style="left:892px;top:481px;width:55px;height:19px;border-color:#adc2e4;"></div>
<span class="t dis" style="left:901.2px;top:485px;letter-spacing:0.075px;">Ajustes</span>
<div class="cell" style="left:192.5px;top:502px;width:47.5px;height:21px;"></div>
<div class="cell" style="left:240.7px;top:502px;width:335.6px;height:21px;"></div>
<div class="cell" style="left:576.3px;top:502px;width:123px;height:21px;"></div>
<div class="cell" style="left:699.3px;top:502px;width:91.7px;height:21px;"></div>
<div class="cell" style="left:793px;top:502px;width:92px;height:21px;"></div>
<div class="btn" style="left:892px;top:503px;width:55px;height:19px;border-color:#adc2e4;"></div>
<span class="t dis" style="left:901.2px;top:507px;letter-spacing:0.075px;">Ajustes</span>
<div class="cell" style="left:192.5px;top:523px;width:47.5px;height:21px;"></div>
<div class="cell" style="left:240.7px;top:523px;width:335.6px;height:21px;"></div>
<div class="cell" style="left:576.3px;top:523px;width:123px;height:21px;"></div>
<div class="cell" style="left:699.3px;top:523px;width:91.7px;height:21px;"></div>
<div class="cell" style="left:793px;top:523px;width:92px;height:21px;"></div>
<div class="btn" style="left:892px;top:524px;width:55px;height:19px;border-color:#adc2e4;"></div>
<span class="t dis" style="left:901.2px;top:528px;letter-spacing:0.075px;">Ajustes</span>
<span class="t" style="left:195.7px;top:336px;letter-spacing:-0.725px;">73</span>
<span class="t" style="left:244.5px;top:336px;letter-spacing:-0.760px;word-spacing:0.760px;">POR SAIDA COM DEBITO DE IMPOSTO</span>
<span class="t" style="left:819.3px;top:336px;letter-spacing:-0.035px;">3,694,119.88</span>
<div style="left:181px;top:345px;width:10.5px;height:189px;background:#e8edf6;"></div>
<div style="left:180px;top:332px;width:12.8px;height:13px;background:#eaeff7;border:1px solid #cfdcef;border-radius:7px 7px 0 0;"></div>
<div style="left:180px;top:532px;width:12.8px;height:13px;background:#eaeff7;border:1px solid #cfdcef;border-radius:0 0 7px 7px;"></div>
<svg style="left:180px;top:332px" width="12" height="213" viewBox="0 0 12 213"><path d="M2.0 9.0 H10.0 L6.0 4.5 Z" fill="#5f6780"/><path d="M2.0 204.0 H10.0 L6.0 208.5 Z" fill="#5e6877"/></svg>
<div style="left:190.2px;top:348.2px;width:52.8px;height:27.6px;border:3px solid #ff0000;border-radius:2.5px;"></div>
<div class="fld" style="left:794px;top:548px;width:130px;height:22px;"></div>
<div class="btn" style="left:928px;top:573px;width:22px;height:24px;border-color:#b0c3e2;"></div>
<svg style="left:928px;top:571.5px" width="20" height="22" viewBox="0 0 20 22"><g shape-rendering="crispEdges" transform="translate(0,0)"><rect x="4" y="4.5" width="12" height="15" fill="#fff"/><rect x="3" y="3.5" width="12" height="15" fill="#000"/><rect x="10" y="5" width="4" height="12.4" fill="#d4d4d4"/><path d="M4 4.5 H10.5 V14.5 L9.5 15.5 L7 16.5 H4 Z" fill="#f00"/><rect x="8" y="8.5" width="1.4" height="1.4" fill="#ff0"/><rect x="3" y="7.5" width="1" height="1" fill="#ff0"/><rect x="3" y="11.5" width="1" height="1" fill="#ff0"/></g></svg>
<div style="left:190px;top:386px;width:672px;height:406px;background:#c0c0c0;border:1px solid #3f5f92;border-right-color:#c0c0c0;border-radius:2px 2px 2px 2px;"></div>
<div style="left:858px;top:386px;width:4.5px;height:3px;background:#2d6fb8;border-top:1px solid #3f5f92;"></div>
<div style="left:859.5px;top:789.5px;width:2.5px;height:2.5px;background:#3f5f92;"></div>
<div style="left:191px;top:387px;width:671px;height:20px;background:#2c81c5;"></div>
<span class="t" style="left:193.5px;top:391px;font-size:12px;line-height:15px;color:#fff;letter-spacing:0.152px;word-spacing:-0.152px;">Lista de Subtitulo</span>
<div style="left:846px;top:392px;width:12px;height:11px;background:#cfe1f5;border:1px solid #a9c9ea;"></div>
<svg style="left:846px;top:392px" width="12" height="11" viewBox="0 0 12 11"><path d="M3 2.5 L9 8.5 M9 2.5 L3 8.5" stroke="#2a78c8" stroke-width="1.7"/></svg>
<span class="t" style="left:198px;top:437px;letter-spacing:-0.602px;">Find</span>
<div style="left:218.5px;top:432px;width:636.5px;height:21px;background:#c0c0c0;border:1px solid #c6d6ee;border-bottom-color:#edf2fa;border-right-color:#e4ebf6;border-radius:3px;box-shadow:inset 1px 1px 0 #a2aaba;"></div>
<span class="t" style="left:221.5px;top:437px;text-shadow:0.35px 0 0 #000;letter-spacing:-0.581px;">%</span>
<div style="left:199px;top:464px;width:655px;height:284px;background:#fff;border:1px solid #b5c5df;border-radius:4px 4px 2px 2px;overflow:hidden;"></div>
<div style="left:200px;top:465px;width:653px;height:17px;background:#e8eef8;border-radius:3px 3px 0 0;"></div>
<div style="left:308px;top:465px;width:1px;height:16px;background:#cbd6e8;"></div>
<div style="left:309px;top:465px;width:1px;height:16px;background:#fff;"></div>
<div style="left:724px;top:465px;width:1px;height:16px;background:#cbd6e8;"></div>
<div style="left:725px;top:465px;width:1px;height:16px;background:#fff;"></div>
<span class="t" style="left:226.3px;top:468px;letter-spacing:-0.343px;word-spacing:0.343px;">Codigo Subtítulo</span>
<span class="t" style="left:315px;top:468px;letter-spacing:-0.056px;">Descricao</span>
<span class="t" style="left:731.3px;top:468px;letter-spacing:-0.480px;">Complemento</span>
<div style="left:200px;top:482px;width:653px;height:17px;background:#47628d;border-top:1px dotted #dfe6f2;border-bottom:1px dotted #dfe6f2;"></div>
<span class="t" style="left:291.4px;top:485px;color:#fff;letter-spacing:-0.125px;">73</span>
<span class="t" style="left:315.2px;top:485px;color:#fff;letter-spacing:-0.748px;word-spacing:0.748px;">POR SAIDA COM DEBITO DE IMPOSTO</span>
<span class="t" style="left:285.4px;top:502px;color:#1a1a1a;letter-spacing:-0.120px;">139</span>
<span class="t" style="left:315.2px;top:502px;color:#1a1a1a;letter-spacing:-0.674px;word-spacing:0.674px;">ICMS RECOLHIDO POR SUBSTITUICAO TRIBUTACAO</span>
<span class="t" style="left:731.3px;top:502px;color:#1a1a1a;letter-spacing:-0.781px;">ST</span>
<span class="t" style="left:285.4px;top:519px;color:#1a1a1a;letter-spacing:-0.120px;">207</span>
<span class="t" style="left:315.2px;top:519px;color:#1a1a1a;letter-spacing:-0.715px;word-spacing:0.715px;">ICMS RECOLHIDO DIFAL</span>
<span class="t" style="left:731.3px;top:519px;color:#1a1a1a;letter-spacing:-0.385px;">PARTILHA</span>
<span class="t" style="left:285.4px;top:536px;color:#1a1a1a;letter-spacing:-0.120px;">210</span>
<span class="t" style="left:315.2px;top:536px;color:#1a1a1a;letter-spacing:-0.597px;word-spacing:0.597px;">IMPOSTO RETIDO EM REM P/VENDA FORA ESTAB.ART 284, RICMS</span>
<span class="t" style="left:285.4px;top:553px;color:#1a1a1a;letter-spacing:-0.120px;">212</span>
<span class="t" style="left:315.2px;top:553px;color:#1a1a1a;letter-spacing:-0.660px;word-spacing:0.660px;">ICMS RECOLHIDO FUNDO DE COMBATE A POBREZA</span>
<span class="t" style="left:731.3px;top:553px;color:#1a1a1a;letter-spacing:-0.653px;word-spacing:0.653px;">FCP EC 87/15</span>
<div style="left:200px;top:732px;width:653px;height:15px;background:#bfcfe8;border-top:1px solid #c5d2e6;"></div>
<div style="left:214px;top:733px;width:504px;height:14px;background:#e6ecf6;"></div>
<div style="left:200px;top:732px;width:14px;height:15px;background:#e6ecf6;border:1px solid #c5d2e6;border-radius:6px 0 0 6px;"></div>
<div style="left:839px;top:732px;width:14px;height:15px;background:#e6ecf6;border:1px solid #c5d2e6;border-radius:0 6px 6px 0;"></div>
<div style="left:213px;top:734px;width:1px;height:12px;background:#6c7688;"></div>
<svg style="left:200px;top:732px" width="655" height="15" viewBox="0 0 655 15"><path d="M10 3.5 V11.5 L5.5 7.5 Z" fill="#4e5868"/><path d="M644 3.5 V11.5 L648.5 7.5 Z" fill="#4e5868"/><path d="M190.5 6.4 l1.8 -1.8 M187.2 10.6 l1.8 -1.8" stroke="#9eacc4" stroke-width="1"/><path d="M197.3 6.4 l1.8 -1.8 M194.0 10.6 l1.8 -1.8" stroke="#9eacc4" stroke-width="1"/><path d="M204.1 6.4 l1.8 -1.8 M200.8 10.6 l1.8 -1.8" stroke="#9eacc4" stroke-width="1"/><path d="M210.9 6.4 l1.8 -1.8 M207.6 10.6 l1.8 -1.8" stroke="#9eacc4" stroke-width="1"/><path d="M217.7 6.4 l1.8 -1.8 M214.4 10.6 l1.8 -1.8" stroke="#9eacc4" stroke-width="1"/><path d="M224.5 6.4 l1.8 -1.8 M221.2 10.6 l1.8 -1.8" stroke="#9eacc4" stroke-width="1"/><path d="M231.3 6.4 l1.8 -1.8 M228.0 10.6 l1.8 -1.8" stroke="#9eacc4" stroke-width="1"/><path d="M238.1 6.4 l1.8 -1.8 M234.8 10.6 l1.8 -1.8" stroke="#9eacc4" stroke-width="1"/><path d="M244.9 6.4 l1.8 -1.8 M241.6 10.6 l1.8 -1.8" stroke="#9eacc4" stroke-width="1"/><path d="M251.7 6.4 l1.8 -1.8 M248.4 10.6 l1.8 -1.8" stroke="#9eacc4" stroke-width="1"/><path d="M258.5 6.4 l1.8 -1.8 M255.2 10.6 l1.8 -1.8" stroke="#9eacc4" stroke-width="1"/><path d="M265.3 6.4 l1.8 -1.8 M262.0 10.6 l1.8 -1.8" stroke="#9eacc4" stroke-width="1"/><path d="M272.1 6.4 l1.8 -1.8 M268.8 10.6 l1.8 -1.8" stroke="#9eacc4" stroke-width="1"/><path d="M278.9 6.4 l1.8 -1.8 M275.6 10.6 l1.8 -1.8" stroke="#9eacc4" stroke-width="1"/><path d="M285.7 6.4 l1.8 -1.8 M282.4 10.6 l1.8 -1.8" stroke="#9eacc4" stroke-width="1"/><path d="M292.5 6.4 l1.8 -1.8 M289.2 10.6 l1.8 -1.8" stroke="#9eacc4" stroke-width="1"/><path d="M299.3 6.4 l1.8 -1.8 M296.0 10.6 l1.8 -1.8" stroke="#9eacc4" stroke-width="1"/><path d="M306.1 6.4 l1.8 -1.8 M302.8 10.6 l1.8 -1.8" stroke="#9eacc4" stroke-width="1"/><path d="M312.9 6.4 l1.8 -1.8 M309.6 10.6 l1.8 -1.8" stroke="#9eacc4" stroke-width="1"/><path d="M319.7 6.4 l1.8 -1.8 M316.4 10.6 l1.8 -1.8" stroke="#9eacc4" stroke-width="1"/><path d="M326.5 6.4 l1.8 -1.8 M323.2 10.6 l1.8 -1.8" stroke="#9eacc4" stroke-width="1"/><path d="M333.3 6.4 l1.8 -1.8 M330.0 10.6 l1.8 -1.8" stroke="#9eacc4" stroke-width="1"/><path d="M340.1 6.4 l1.8 -1.8 M336.8 10.6 l1.8 -1.8" stroke="#9eacc4" stroke-width="1"/><path d="M346.9 6.4 l1.8 -1.8 M343.6 10.6 l1.8 -1.8" stroke="#9eacc4" stroke-width="1"/></svg>
<div style="left:454.5px;top:760px;width:37px;height:23px;background:#d7e3f4;border:1px solid #8ea2c4;border-radius:9px;"></div>
<span class="t" style="left:463.3px;top:765px;letter-spacing:-0.530px;"><u>F</u>ind</span>
<div style="left:529.5px;top:758px;width:47.5px;height:26px;background:#d7e3f4;border:1px solid #5d7399;border-right:2px solid #4f6790;border-bottom:2px solid #4f6790;border-radius:11px 2px 2px 11px;"></div>
<span class="t" style="left:548px;top:765px;letter-spacing:-0.303px;"><u>O</u>K</span>
<div style="left:583.5px;top:760px;width:45.5px;height:23px;background:#d7e3f4;border:1px solid #8ea2c4;border-radius:2px 10px 10px 2px;"></div>
<span class="t" style="left:587.6px;top:765px;letter-spacing:-0.208px;"><u>C</u>ancel</span>
<div style="left:190px;top:389px;width:675px;height:3px;background:#ff0000;border-radius:0 2px 0 0;"></div>
<div style="left:190px;top:389px;width:3.3px;height:406px;background:#ff0000;border-radius:0 0 0 2px;"></div>
<div style="left:861.9px;top:389px;width:3.1px;height:406px;background:#ff0000;border-radius:0 2px 2px 0;"></div>
<div style="left:190px;top:791.9px;width:675px;height:3.1px;background:#ff0000;border-radius:0 0 2px 2px;"></div>
</div></body></html>
